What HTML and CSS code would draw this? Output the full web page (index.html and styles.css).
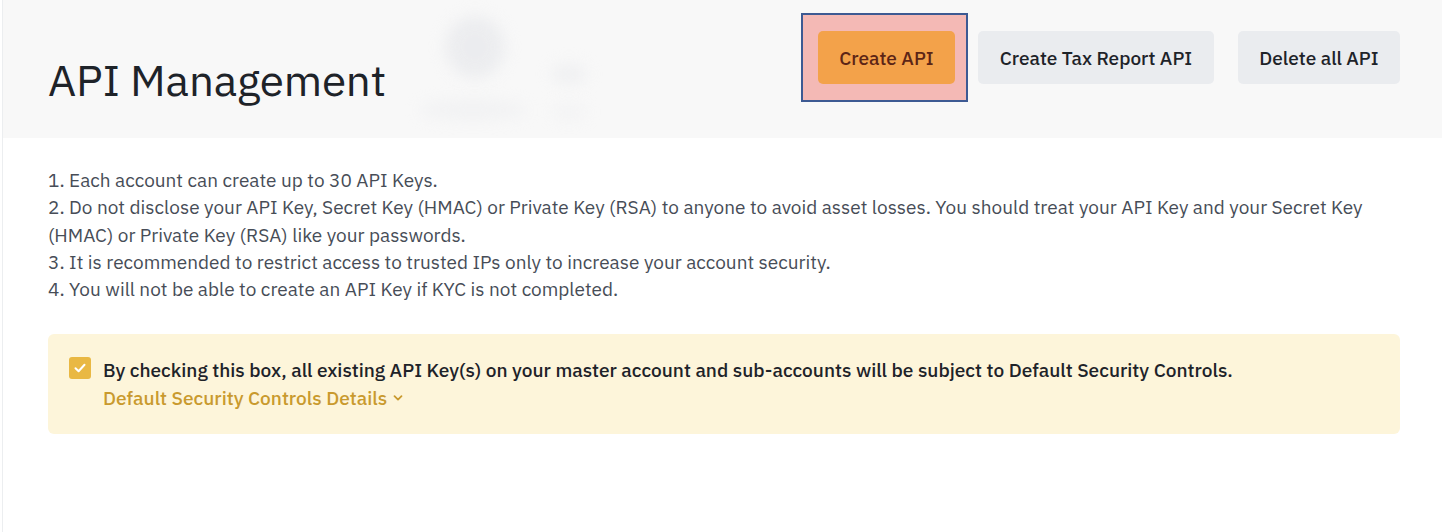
FILE: index.html
```html
<!DOCTYPE html>
<html lang="en">
<head>
<meta charset="utf-8">
<title>API Management</title>
<link rel="stylesheet" href="styles.css">
</head>
<body>
<div class="page">
  <header class="header">
    <div class="blur blur-a"></div>
    <div class="blur blur-b"></div>
    <div class="blur blur-c"></div>
    <div class="blur blur-d"></div>
    <h1 class="title">API Management</h1>
    <div class="actions">
      <button class="btn btn-primary highlighted">Create API</button>
      <button class="btn btn-secondary">Create Tax Report API</button>
      <button class="btn btn-secondary btn-last">Delete all API</button>
    </div>
  </header>
  <main class="content">
    <div class="notes">
      <p>1. Each account can create up to 30 API Keys.</p>
      <p>2. Do not disclose your API Key, Secret Key (HMAC) or Private Key (RSA) to anyone to avoid asset losses. You should treat your API Key and your Secret Key (HMAC) or Private Key (RSA) like your passwords.</p>
      <p>3. It is recommended to restrict access to trusted IPs only to increase your account security.</p>
      <p>4. You will not be able to create an API Key if KYC is not completed.</p>
    </div>
    <div class="notice">
      <span class="checkbox">
        <svg width="14" height="14" viewBox="0 0 14 14"><path d="M2.5 7.2 L5.6 10.2 L11.5 3.8" fill="none" stroke="#fff" stroke-width="2" stroke-linecap="round" stroke-linejoin="round"/></svg>
      </span>
      <div class="notice-body">
        <div class="notice-text">By checking this box, all existing API Key(s) on your master account and sub-accounts will be subject to Default Security Controls.</div>
        <a class="notice-link">Default Security Controls Details<svg class="chev" width="10" height="8" viewBox="0 0 10 8"><path d="M1.5 2.2 L5 5.6 L8.5 2.2" fill="none" stroke="#c99a2e" stroke-width="1.8" stroke-linecap="round" stroke-linejoin="round"/></svg></a>
      </div>
    </div>
  </main>
</div>
</body>
</html>
```

FILE: styles.css
```css
* { box-sizing: border-box; }
html, body { margin: 0; padding: 0; background: #fff; }
body {
  font-family: "IBM Plex Sans", Roboto, "Noto Sans", sans-serif;
  color: #1e2329;
}
.page {
  margin-left: 2px;
  border-left: 1px solid #eceef0;
  min-height: 532px;
}
.header {
  position: relative;
  height: 138px;
  background: #f8f8f8;
  display: flex;
  justify-content: space-between;
  align-items: flex-start;
  padding: 0 42px 0 45px;
  overflow: hidden;
}
.blur {
  position: absolute;
  background: #e9eaed;
  filter: blur(8px);
  border-radius: 50%;
  opacity: 0.8;
}
.blur-a { left: 442px; top: 16px; width: 60px; height: 62px; }
.blur-b { left: 548px; top: 64px; width: 36px; height: 20px; opacity: 0.6; }
.blur-c { left: 415px; top: 100px; width: 110px; height: 20px; opacity: 0.45; }
.blur-d { left: 548px; top: 105px; width: 36px; height: 14px; opacity: 0.4; }
.title {
  position: relative;
  margin: 53px 0 0;
  font-size: 44px;
  font-weight: 400;
  line-height: 54px;
  color: #1e2329;
  letter-spacing: -0.2px;
}
.actions {
  position: relative;
  display: flex;
  align-items: center;
  margin-top: 31px;
  isolation: isolate;
}
.btn {
  height: 53px;
  border: none;
  border-radius: 5px;
  font-family: inherit;
  font-size: 19px;
  font-weight: 500;
  padding: 0 10px;
  cursor: pointer;
}
.btn-primary {
  width: 137px;
  background: #f3a24a;
  color: #5c2516;
}
.btn-secondary {
  background: #eaecef;
  color: #1e2329;
  margin-left: 23px;
}
.btn-secondary:nth-child(2) { width: 236px; }
.btn-last { width: 162px; margin-left: 24px; }
.highlighted { position: relative; }
.highlighted::before {
  content: "";
  position: absolute;
  left: -17px; right: -13px; top: -18px; bottom: -18px;
  background: #f4b9b5;
  border: 2px solid #3d5a93;
  z-index: -1;
}
.content {
  padding: 29px 42px 0 45px;
}
.notes {
  font-size: 19px;
  line-height: 27.3px;
  color: #474d57;
}
.notes p { margin: 0; }
.notice {
  margin-top: 31px;
  background: #fdf5da;
  border-radius: 6px;
  padding: 23px 21px 22px;
  display: flex;
  align-items: flex-start;
  min-height: 98px;
}
.checkbox {
  width: 22px;
  height: 22px;
  border-radius: 3px;
  background: #e9b843;
  display: flex;
  align-items: center;
  justify-content: center;
  flex-shrink: 0;
  margin-right: 12px;
}
.notice-body { font-size: 19.1px; line-height: 28px; margin-top: -1px; }
.notice-text { font-weight: 500; color: #1e2329; }
.notice-link {
  color: #c99a2e;
  font-weight: 500;
  display: inline-flex;
  align-items: center;
}
.chev { margin-left: 6px; }
```
